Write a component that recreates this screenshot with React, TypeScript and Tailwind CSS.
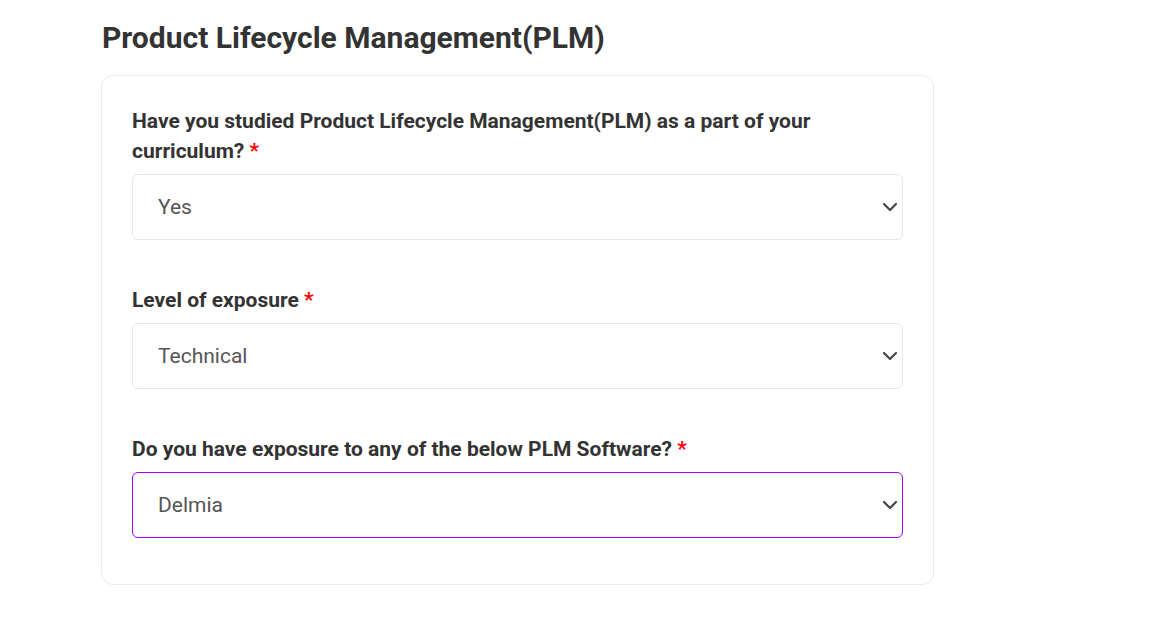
import { ChevronDown } from "lucide-react";

interface FieldProps {
  label: string;
  value: string;
  options: string[];
  focused?: boolean;
}

function SelectField({ label, value, options, focused = false }: FieldProps) {
  return (
    <div className="mb-[45px]">
      <label className="mb-[8px] block text-[21px] font-bold leading-[30px] text-[#333333]">
        {label} <span className="text-[#ff0000]">*</span>
      </label>
      <div className="relative">
        <select
          defaultValue={value}
          className={
            focused
              ? "block h-[66px] w-full appearance-none rounded-[6px] border border-[#a000f5] bg-white pl-[25px] pt-[2px] text-[21px] text-[#555555] outline-none"
              : "block h-[66px] w-full appearance-none rounded-[6px] border border-[#e6e6e6] bg-white pl-[25px] pt-[2px] text-[21px] text-[#555555] outline-none"
          }
        >
          {options.map((o) => (
            <option key={o}>{o}</option>
          ))}
        </select>
        <ChevronDown
          className="pointer-events-none absolute right-[1px] top-1/2 h-[24px] w-[24px] -translate-y-1/2 text-[#444444]"
          strokeWidth={2.2}
        />
      </div>
    </div>
  );
}

export default function App() {
  return (
    <div className="min-h-screen bg-white font-['Roboto',sans-serif]">
      <div className="box-content w-[833px] pl-[101px] pt-[18px]">
        <h2 className="mb-[17px] pl-px text-[30px] font-bold leading-[40px] text-[#333333]">
          Product Lifecycle Management(PLM)
        </h2>
        <div className="rounded-[12px] border border-[#ebebeb] px-[30px] pb-px pt-[30px]">
          <SelectField
            label="Have you studied Product Lifecycle Management(PLM) as a part of your curriculum?"
            value="Yes"
            options={["Yes", "No"]}
          />
          <SelectField
            label="Level of exposure"
            value="Technical"
            options={["Basic", "Technical", "Advanced"]}
          />
          <SelectField
            label="Do you have exposure to any of the below PLM Software?"
            value="Delmia"
            options={["Teamcenter", "Windchill", "Enovia", "Delmia"]}
            focused
          />
        </div>
      </div>
    </div>
  );
}
